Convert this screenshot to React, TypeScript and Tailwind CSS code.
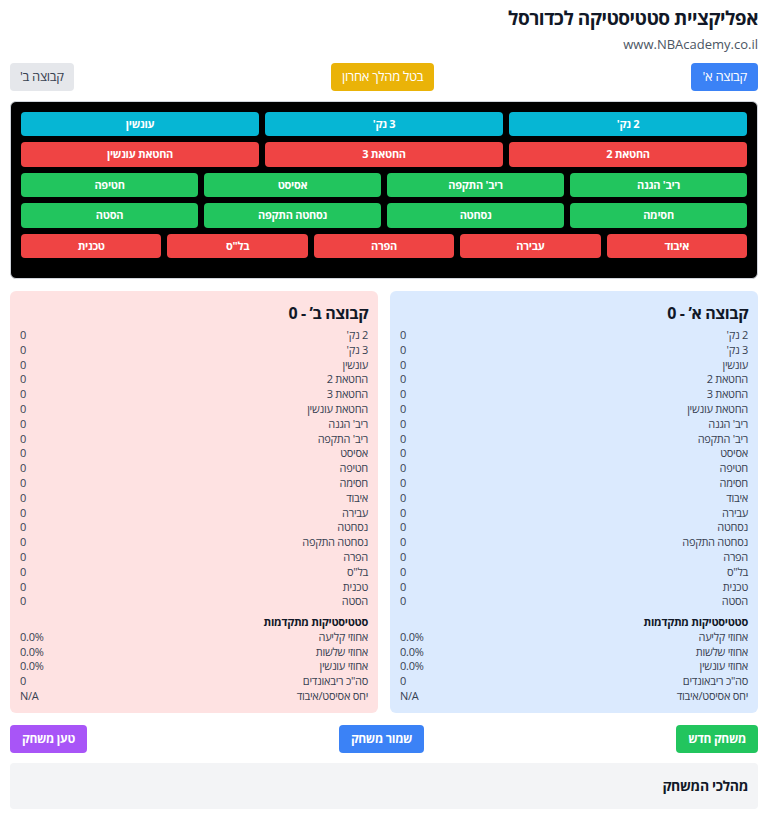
import React from "react";

const ROW1 = ["2 נק'", "3 נק'", "עונשין"];
const ROW2 = ["החטאת 2", "החטאת 3", "החטאת עונשין"];
const ROW3 = ["ריב' הגנה", "ריב' התקפה", "אסיסט", "חטיפה"];
const ROW4 = ["חסימה", "נסחטה", "נסחטה התקפה", "הסטה"];
const ROW5 = ["איבוד", "עבירה", "הפרה", 'בל"ס', "טכנית"];

const STATS = [
  "2 נק'", "3 נק'", "עונשין", "החטאת 2", "החטאת 3", "החטאת עונשין",
  "ריב' הגנה", "ריב' התקפה", "אסיסט", "חטיפה", "חסימה", "איבוד",
  "עבירה", "נסחטה", "נסחטה התקפה", "הפרה", 'בל"ס', "טכנית", "הסטה",
];

const ADVANCED = [
  { label: "אחוזי קליעה", value: "0.0%" },
  { label: "אחוזי שלשות", value: "0.0%" },
  { label: "אחוזי עונשין", value: "0.0%" },
  { label: 'סה"כ ריבאונדים', value: "0" },
  { label: "יחס אסיסט/איבוד", value: "N/A" },
];

function ActionButton({ label, color }: { label: string; color: string }) {
  return (
    <button className={`h-[24.4px] rounded text-[11px] font-bold tracking-tight text-white ${color}`}>
      {label}
    </button>
  );
}

function TeamPanel({ name, bg }: { name: string; bg: string }) {
  return (
    <div className={`rounded-md px-2.5 pt-3 pb-[9px] ${bg}`}>
      <h2 className="mb-[5px] text-base font-bold leading-5 tracking-tight text-[#111827]">{name} - 0</h2>
      {STATS.map((s) => (
        <div key={s} className="flex justify-between text-[11px] leading-[14.8px] tracking-tight text-[#374151]">
          <span>{s}</span>
          <span>0</span>
        </div>
      ))}
      <div className="mt-1.5 text-[11px] font-bold leading-[14.8px] tracking-tight text-[#111827]">
        סטטיסטיקות מתקדמות
      </div>
      {ADVANCED.map((a) => (
        <div key={a.label} className="flex justify-between text-[11px] leading-[14.8px] tracking-tight text-[#374151]">
          <span>{a.label}</span>
          <span>{a.value}</span>
        </div>
      ))}
    </div>
  );
}

export default function App() {
  return (
    <div dir="rtl" className="min-h-screen bg-white px-2.5 pt-1 pb-2.5 font-['Open_Sans','Liberation_Sans',sans-serif] text-[#111827]">
      <h1 className="text-[19px] font-bold leading-7 tracking-tight">אפליקציית סטטיסטיקה לכדורסל</h1>
      <p className="mt-0.5 text-[13px] leading-5 text-[#4b5563]">www.NBAcademy.co.il</p>

      <div className="mt-[9px] flex justify-between">
        <button className="h-7 rounded bg-[#3b82f6] px-[11px] text-[13px] tracking-tight text-white">קבוצה א'</button>
        <button className="h-7 rounded bg-[#eab308] px-[11px] text-[13px] tracking-tight text-white">בטל מהלך אחרון</button>
        <button className="h-7 rounded bg-[#e5e7eb] px-2.5 text-[13px] tracking-tight text-[#374151]">קבוצה ב'</button>
      </div>

      {/* action grid */}
      <div className="mt-2.5 flex flex-col gap-1.5 rounded-md border border-gray-300 bg-black p-2.5 pb-5">
        <div className="grid grid-cols-3 gap-1.5">
          {ROW1.map((l) => <ActionButton key={l} label={l} color="bg-[#06b6d4]" />)}
        </div>
        <div className="grid grid-cols-3 gap-1.5">
          {ROW2.map((l) => <ActionButton key={l} label={l} color="bg-[#ef4444]" />)}
        </div>
        <div className="grid grid-cols-4 gap-1.5">
          {ROW3.map((l) => <ActionButton key={l} label={l} color="bg-[#22c55e]" />)}
        </div>
        <div className="grid grid-cols-4 gap-1.5">
          {ROW4.map((l) => <ActionButton key={l} label={l} color="bg-[#22c55e]" />)}
        </div>
        <div className="grid grid-cols-5 gap-1.5">
          {ROW5.map((l) => <ActionButton key={l} label={l} color="bg-[#ef4444]" />)}
        </div>
      </div>

      <div className="mt-3 grid grid-cols-2 gap-3">
        <TeamPanel name="קבוצה א’" bg="bg-[#dbeafe]" />
        <TeamPanel name="קבוצה ב’" bg="bg-[#fee2e2]" />
      </div>

      <div className="mt-3 flex justify-between">
        <button className="h-7 rounded bg-[#22c55e] px-3 text-xs font-bold tracking-tight text-white">משחק חדש</button>
        <button className="h-7 rounded bg-[#3b82f6] px-3 text-xs font-bold tracking-tight text-white">שמור משחק</button>
        <button className="h-7 rounded bg-[#a855f7] px-3 text-xs font-bold tracking-tight text-white">טען משחק</button>
      </div>

      <div className="mt-2.5 rounded bg-[#f3f4f6] px-2.5 py-[11px]">
        <h3 className="text-sm font-bold leading-6 tracking-tight">מהלכי המשחק</h3>
      </div>
    </div>
  );
}
